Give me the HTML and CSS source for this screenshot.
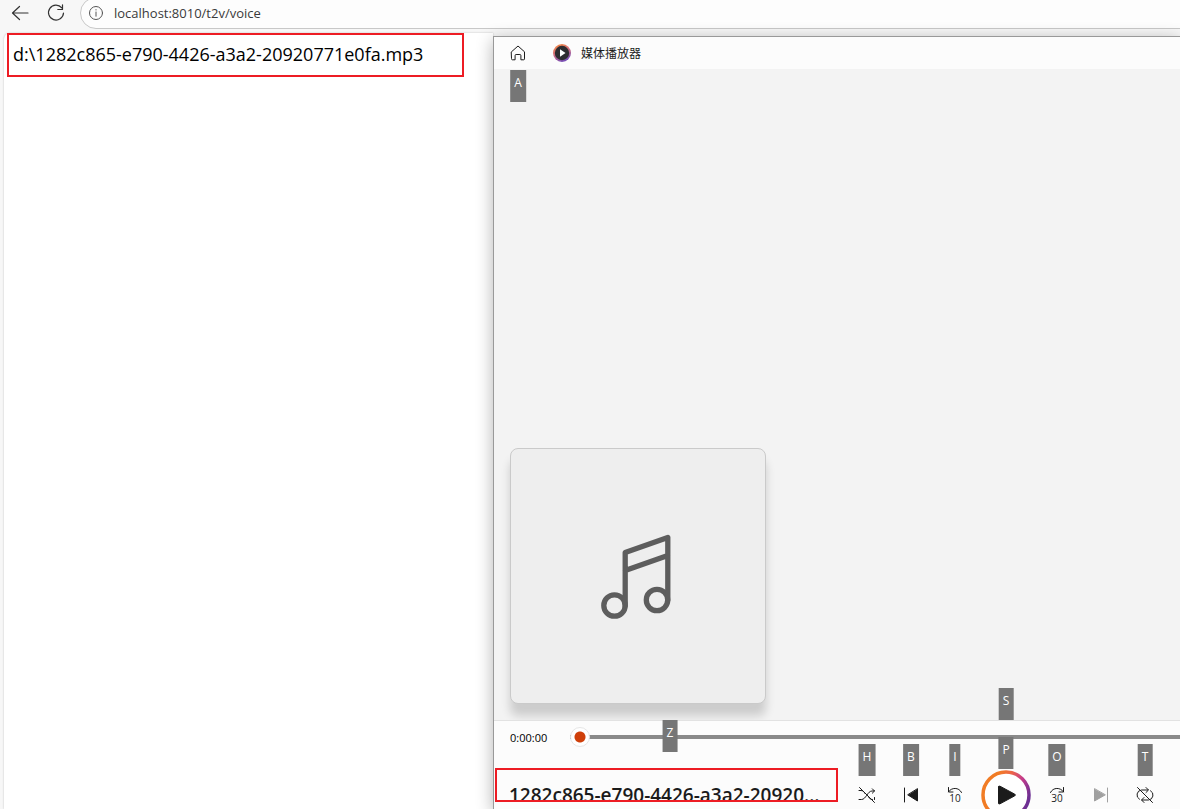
FILE: index.html
```html
<!DOCTYPE html>
<html lang="zh-CN">
<head>
<meta charset="utf-8">
<title>localhost:8010/t2v/voice</title>
<link rel="stylesheet" href="styles.css">
</head>
<body>
<header class="toolbar">
  <button class="nav-button" aria-label="Back">
    <svg width="18" height="16" viewBox="0 0 18 16"><path d="M8.500 1.500 1.500 8l7 6.500M1.500 8H17"/></svg>
  </button>
  <button class="nav-button" aria-label="Refresh">
    <svg width="18" height="18" viewBox="0 0 18 18"><path d="M14.800 3.800A7.500 7.500 0 1 0 16.500 9M15.500 .8v4.700h-4.700"/></svg>
  </button>
  <div class="address">
    <svg width="16" height="16" viewBox="0 0 16 16"><circle cx="8" cy="8" r="6.500"/><path d="M8 7v4.200M8 4.600v.4"/></svg>
    <input class="address-input" type="text" aria-label="Address" value="localhost:8010/t2v/voice">
  </div>
</header>
<div class="workspace">
  <main class="page">
    <p class="file-path">d:\1282c865-e790-4426-a3a2-20920771e0fa.mp3</p>
  </main>
  <section class="player">
    <div class="title-bar">
      <button class="home" aria-label="Home">
        <svg width="16" height="16" viewBox="0 0 16 16"><path d="M1.500 6.800 8 1l6.500 5.800v7.100a.9.9 0 0 1-.9.900h-2.700v-4.300a1 1 0 0 0-1-1H6.100a1 1 0 0 0-1 1v4.300H2.400a.9.900 0 0 1-.9-.9z"/></svg>
        <span class="key">A</span>
      </button>
      <svg class="logo" width="18" height="18" viewBox="0 0 18 18">
        <defs><linearGradient id="logo-ring" x1="0" y1="0" x2=".4" y2="1"><stop offset="0" stop-color="#f58a35"/><stop offset=".5" stop-color="#d8707a"/><stop offset="1" stop-color="#7b50b5"/></linearGradient></defs>
        <circle cx="9" cy="9" r="9" fill="url(#logo-ring)"/><circle cx="9" cy="9" r="7.200" fill="#2d2d30"/><path d="M7 5.200 12.500 9 7 12.800z" fill="#fff"/>
      </svg>
      <span class="app-name">媒体播放器</span>
    </div>
    <div class="stage">
      <div class="cover">
        <svg width="76" height="90" viewBox="0 0 76 90"><circle cx="14.500" cy="74.500" r="10.700"/><circle cx="57" cy="69" r="10.700"/><path d="M25.200 74.500V21.500L67.800 6.500V69M25.200 39.500 67.800 24.500"/></svg>
      </div>
    </div>
    <footer class="transport">
      <div class="timeline">
        <label class="time" for="seek">0:00:00</label>
        <input class="seek" id="seek" type="range" min="0" max="100" value="0">
      </div>
      <div class="control-row">
        <div class="track">
          <div class="track-title">1282c865-e790-4426-a3a2-20920771e0fa</div>
        </div>
        <span class="key key-track">Z</span>
        <div class="controls">
          <button class="control" aria-label="Shuffle">
            <svg width="18" height="18" viewBox="0 0 18 18"><path d="M1 13.500h2.500C8 13.500 9.500 5 14 5h2.500M1 4.500h2c2 0 3.200 1.500 4.200 3.200M10.500 11c1 1.500 2 2.500 4 2.500M14.300 2.800 16.500 5l-2.200 2.200M16.500 11.500v2M1.500 1.500l15 15"/></svg>
            <span class="key">H</span>
          </button>
          <button class="control" aria-label="Previous">
            <svg width="16" height="16" viewBox="0 0 16 16"><path d="M1.500 1v14"/><path class="solid" d="M14.500 2v12L5 8z"/></svg>
            <span class="key">B</span>
          </button>
          <button class="control" aria-label="Back 10 seconds">
            <svg width="18" height="18" viewBox="0 0 18 18"><path d="M2.500 1.500V6H7M2.500 5.800C5.500 1.200 13 1 15.500 6.500"/><text x="9" y="16">10</text></svg>
            <span class="key">I</span>
          </button>
          <button class="control play" aria-label="Play">
            <svg width="50" height="50" viewBox="0 0 50 50">
              <defs><linearGradient id="play-ring" x1="0" y1=".2" x2="1" y2=".55"><stop offset=".25" stop-color="#f17c25"/><stop offset=".5" stop-color="#ed6548"/><stop offset=".75" stop-color="#c43b8c"/><stop offset="1" stop-color="#6d3093"/></linearGradient></defs>
              <circle cx="25" cy="25" r="23" fill="#fff" stroke="url(#play-ring)" stroke-width="3.500"/><path class="solid" d="M17.500 17v16q0 1.500 1.500.8l14.800-8q1.500-.8 0-1.600L19 16.200q-1.500-.7-1.500.8z"/>
            </svg>
            <span class="key">P</span>
            <span class="key key-seek">S</span>
          </button>
          <button class="control" aria-label="Forward 30 seconds">
            <svg width="18" height="18" viewBox="0 0 18 18"><path d="M15.500 1.500V6H11M15.500 5.800C12.500 1.200 5 1 2.500 6.500"/><text x="9" y="16">30</text></svg>
            <span class="key">O</span>
          </button>
          <button class="control" aria-label="Next" disabled>
            <svg width="16" height="16" viewBox="0 0 16 16"><path d="M14.500 1v14"/><path class="solid" d="M1.500 2v12L12 8z"/></svg>
          </button>
          <button class="control" aria-label="Repeat">
            <svg width="18" height="18" viewBox="0 0 18 18"><path d="M3.500 13.300A5 5 0 0 1 5.500 4H12M10 1.500 12.500 4 10 6.500M14.500 4.700A5 5 0 0 1 12.500 14H6M8 11.500 5.500 14 8 16.500M1.500 1.500l15 15"/></svg>
            <span class="key">T</span>
          </button>
        </div>
      </div>
    </footer>
  </section>
</div>
</body>
</html>
```
FILE: styles.css
```css
* {
  box-sizing: border-box;
}

body {
  margin: 0;
  height: 100vh;
  overflow: hidden;
  display: flex;
  flex-direction: column;
  background: #f7f7f7;
  color: #1b1b1b;
  font-family: "Open Sans", "Noto Sans CJK SC", sans-serif;
}

button {
  border: 0;
  padding: 0;
  background: none;
  color: inherit;
  font: inherit;
}

svg {
  display: block;
  fill: none;
  stroke: currentColor;
  stroke-linecap: round;
  stroke-linejoin: round;
}

.toolbar {
  flex: none;
  height: 29px;
  display: flex;
  padding-left: 2px;
}

.nav-button {
  width: 36px;
  height: 26px;
  display: grid;
  place-items: center;
  color: #333;
}

.nav-button svg {
  stroke-width: 1.2;
}

.address {
  flex: 1;
  height: 32px;
  margin: -3px -20px 0 6px;
  padding-left: 7px;
  display: flex;
  align-items: center;
  gap: 10px;
  border: 1px solid #c8c8c8;
  border-radius: 16px;
  background: #fdfdfd;
  color: #555;
}

.address-input {
  flex: 1;
  border: 0;
  padding: 0;
  background: none;
  color: #3a3a3a;
  font: 13px/20px "Open Sans", sans-serif;
  outline: 0;
}

.workspace {
  flex: 1;
  min-height: 0;
  display: flex;
  padding-left: 4px;
}

.page {
  flex: 0 0 489px;
  margin-top: 4px;
  padding-left: 3px;
  border-radius: 6px 0 0;
  background: #fff;
  box-shadow: 0 0 2px #bbb;
}

.file-path {
  width: 457px;
  margin: 0;
  padding: 5px 4px 7px;
  border: 2px solid #ed1c24;
  color: #000;
  font-size: 18px;
  line-height: 28px;
  white-space: nowrap;
}

.player {
  flex: 1;
  min-width: 0;
  margin-top: 7px;
  display: flex;
  flex-direction: column;
  border: solid #999;
  border-width: 1px 0 0 1px;
  background: #f3f3f3;
  box-shadow: 0 4px 16px rgba(0, 0, 0, .3);
  z-index: 1;
}

.title-bar {
  flex: none;
  height: 32px;
  display: flex;
  align-items: center;
  padding-left: 16px;
  background: #fcfcfc;
  font-size: 12px;
}

.home {
  position: relative;
}

.logo {
  margin: 0 10px 0 27px;
  stroke: none;
}

.key {
  position: absolute;
  top: -31px;
  left: 50%;
  transform: translateX(-50%);
  height: 32px;
  padding: 4px;
  background: #767676;
  color: #fff;
  font-size: 12px;
  line-height: 18px;
}

.home .key {
  top: 25px;
}

.stage {
  flex: 1;
  min-height: 0;
  display: flex;
  align-items: flex-end;
  padding: 16px;
  overflow: hidden;
}

.cover {
  width: 256px;
  height: 256px;
  display: grid;
  place-items: center;
  border: 1px solid #cacaca;
  border-radius: 8px;
  background: #eee;
  box-shadow: 0 12px 10px rgba(0, 0, 0, .16);
  color: #5d5d5d;
}

.cover svg {
  stroke-width: 5.3;
}

.transport {
  flex: none;
  position: relative;
  height: 89px;
  border-top: 1px solid #e2e2e2;
  background: #fcfcfc;
}

.timeline {
  height: 32px;
  display: flex;
  align-items: center;
  padding-left: 16px;
}

.time {
  width: 60px;
  color: #000;
  font-size: 11px;
}

.seek {
  flex: 1;
  height: 20px;
  margin: 0;
  appearance: none;
  background: none;
}

.seek::-webkit-slider-runnable-track {
  height: 4px;
  background: #8a8a8a;
}

.seek::-webkit-slider-thumb {
  appearance: none;
  width: 20px;
  height: 20px;
  margin-top: -8px;
  border: 1px solid #e6e6e6;
  border-radius: 50%;
  background: radial-gradient(circle, #cf3f0a 5px, #fff 6px);
}

.control-row {
  display: flex;
  justify-content: space-between;
  padding: 15px 15px 0 1px;
}

.track {
  flex: 0 1 343px;
  min-width: 0;
  height: 34px;
  padding: 11px 12px 0 12px;
  border: 2px solid #ed1c24;
  overflow: hidden;
}

.track-title {
  overflow: hidden;
  font-size: 19px;
  font-weight: 600;
  line-height: 28px;
  text-overflow: ellipsis;
  white-space: nowrap;
}

.key-track {
  top: -1px;
  left: 176px;
}

.controls {
  display: flex;
  align-items: center;
  gap: 4px;
  height: 54px;
}

.control {
  position: relative;
  width: 40px;
  height: 40px;
  display: grid;
  place-items: center;
}

.control:disabled {
  color: #a0a0a0;
}

.control text {
  fill: currentColor;
  stroke: none;
  font: 500 10px "Open Sans", sans-serif;
  text-anchor: middle;
}

.solid {
  fill: currentColor;
}

.play {
  width: 54px;
  height: 54px;
}

.play .key-seek {
  top: -80px;
}
```
